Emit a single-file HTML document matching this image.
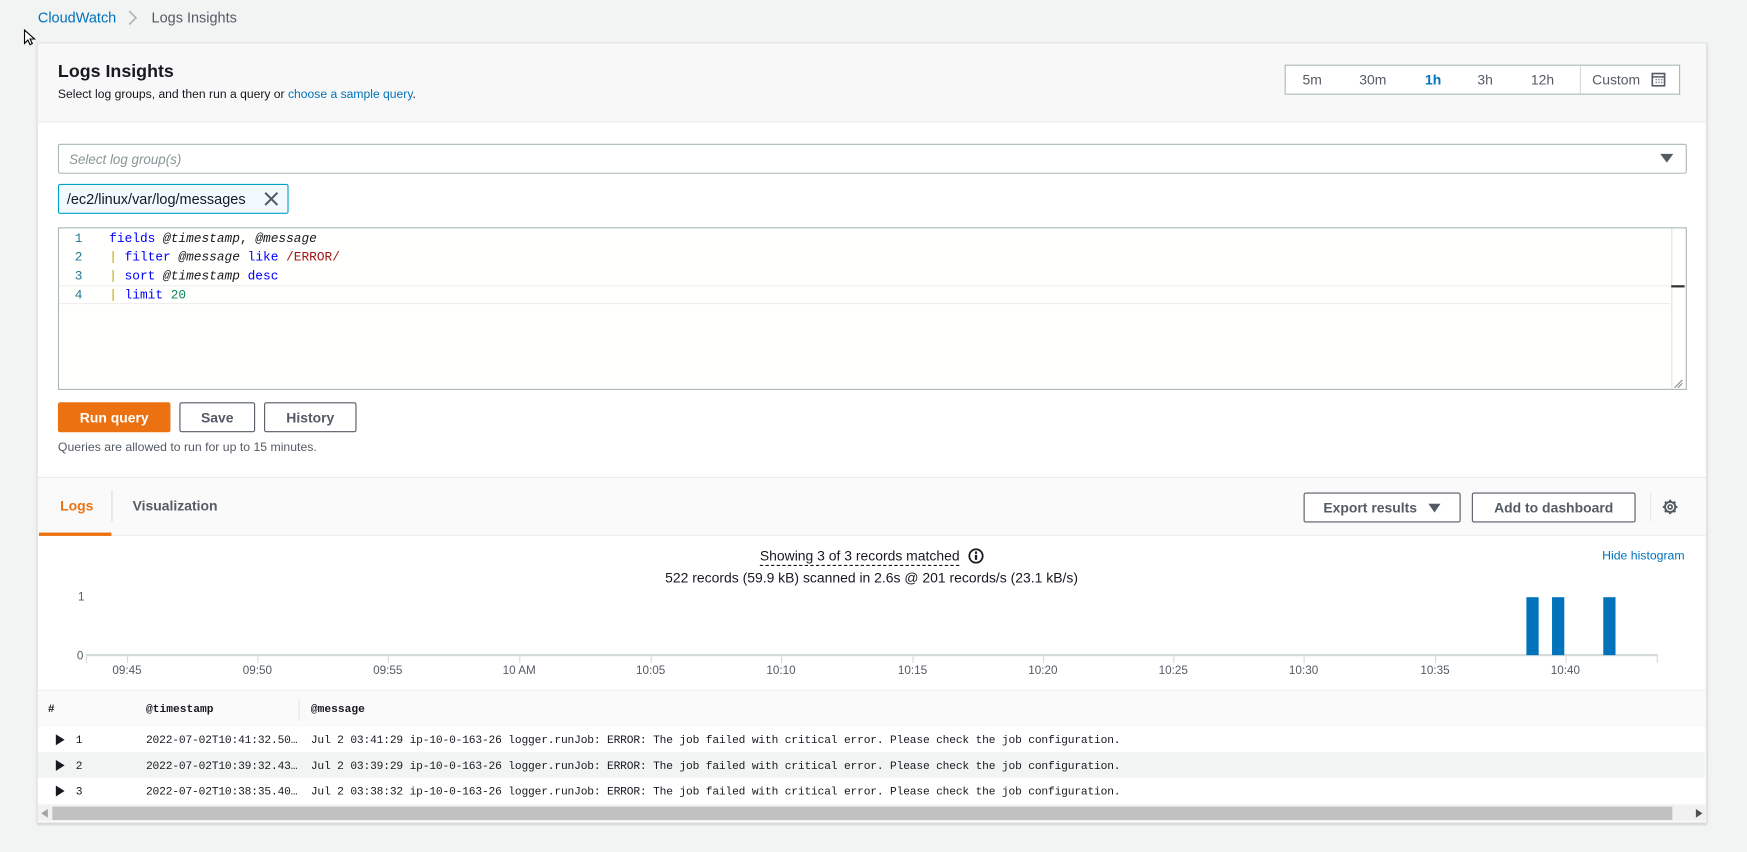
<!DOCTYPE html>
<html><head><meta charset="utf-8"><style>
*{box-sizing:border-box;margin:0;padding:0}
html,body{width:1747px;height:852px;overflow:hidden;background:#f2f3f3}
#s{position:absolute;left:0;top:0;width:1568px;height:765px;transform:scale(1.11416);transform-origin:0 0;font-family:"Liberation Sans",sans-serif;color:#16191f}
.a{position:absolute;white-space:nowrap}
.b{position:absolute;border:1px solid #545b64;border-radius:2px;background:#fff;font-weight:bold;font-size:12.5px;color:#545b64;display:flex;align-items:center;justify-content:center}
.m{font-family:"Liberation Mono",monospace}
.tick{position:absolute;top:589px;width:1px;height:6px;background:#d5dbdb}
.tl{position:absolute;top:596px;font-size:10.5px;color:#545b64;width:60px;text-align:center;margin-left:-30px}
.row{position:absolute;left:34px;width:1496px;height:23px;font-size:10.1px;letter-spacing:-0.15px}
.row span{position:absolute;top:8px}
</style></head><body><div id="s">
<div class="a" style="left:34px;top:8px;font-size:13px;color:#0073bb">CloudWatch</div>
<svg class="a" style="left:114px;top:9px" width="10" height="14"><path d="M2 1l6 6-6 6" fill="none" stroke="#aab7b8" stroke-width="1.5"/></svg>
<div class="a" style="left:136px;top:8px;font-size:13px;color:#545b64">Logs Insights</div>
<svg class="a" style="left:21px;top:26px" width="12" height="16"><path d="M1 1v12l3-3 2 4 2-1-2-4h4z" fill="#fff" stroke="#000" stroke-width="1"/></svg>

<div class="a" style="left:33px;top:38px;width:1499px;height:701px;background:#fff;border:1px solid #dfe3e3;box-shadow:0 1px 2px rgba(0,0,0,.2)"></div>
<div class="a" style="left:34px;top:39px;width:1497px;height:71px;background:#f8f8f8;border-bottom:1px solid #eaeded"></div>
<div class="a" style="left:52px;top:56px;font-size:16px;font-weight:bold">Logs Insights</div>
<div class="a" style="left:52px;top:79px;font-size:10.9px;color:#16191f">Select log groups, and then run a query or <span style="color:#0073bb">choose a sample query</span>.</div>

<div class="a" style="left:1153px;top:58px;width:355px;height:27px;border:1px solid #aab7b8;background:#fff"></div>
<div class="a" style="left:1169px;top:65px;font-size:12.5px;color:#545b64">5m</div>
<div class="a" style="left:1220px;top:65px;font-size:12.5px;color:#545b64">30m</div>
<div class="a" style="left:1279px;top:65px;font-size:12.5px;color:#0073bb;font-weight:bold">1h</div>
<div class="a" style="left:1326px;top:65px;font-size:12.5px;color:#545b64">3h</div>
<div class="a" style="left:1374px;top:65px;font-size:12.5px;color:#545b64">12h</div>
<div class="a" style="left:1418px;top:59px;width:1px;height:25px;background:#d5dbdb"></div>
<div class="a" style="left:1429px;top:65px;font-size:12.5px;color:#545b64">Custom</div>
<svg class="a" style="left:1482px;top:65px" width="13" height="13"><rect x="1" y="1" width="11" height="11" fill="none" stroke="#545b64" stroke-width="1.5"/><path d="M1 4h11M4 6.5h1M6.5 6.5h1M9 6.5h1M4 9h1M6.5 9h1M9 9h1" stroke="#545b64" stroke-width="1.3"/></svg>

<div class="a" style="left:52px;top:129px;width:1462px;height:27px;border:1px solid #aab7b8;border-radius:2px;background:#fff"></div>
<div class="a" style="left:62px;top:136px;font-size:12px;font-style:italic;color:#879596">Select log group(s)</div>
<svg class="a" style="left:1490px;top:138px" width="12" height="9"><path d="M0 0h12L6 8z" fill="#545b64"/></svg>

<div class="a" style="left:52px;top:165px;width:207px;height:27px;border:1px solid #00a1c9;border-radius:2px;background:#f1faff"></div>
<div class="a" style="left:60px;top:171px;font-size:13px;color:#16191f">/ec2/linux/var/log/messages</div>
<svg class="a" style="left:237px;top:172px" width="13" height="13"><path d="M1 1l11 11M12 1L1 12" stroke="#545b64" stroke-width="1.8"/></svg>

<div class="a" style="left:52px;top:204px;width:1462px;height:146px;border:1px solid #aab7b8;background:#fffffd"></div>
<div class="a" style="left:53px;top:256px;width:1446px;height:17px;border-top:1px solid #eeeeee;border-bottom:1px solid #eeeeee"></div>
<div class="a" style="left:1500px;top:205px;width:1px;height:144px;background:#e0e0e0"></div>
<div class="a" style="left:1500px;top:256px;width:12px;height:2px;background:#333"></div>
<div class="a m" style="left:62px;top:206px;font-size:11.5px;line-height:17px;color:#237893;text-align:right;width:12px">1<br>2<br>3<br>4</div>
<div class="a m" style="left:98px;top:206px;font-size:11.5px;line-height:17px;color:#16191f">
<span style="color:#0000ff">fields</span> <i>@timestamp</i>, <i>@message</i><br>
<span style="color:#c8a000">|</span> <span style="color:#0000ff">filter</span> <i>@message</i> <span style="color:#0000ff">like</span> <span style="color:#a31515">/ERROR/</span><br>
<span style="color:#c8a000">|</span> <span style="color:#0000ff">sort</span> <i>@timestamp</i> <span style="color:#0000ff">desc</span><br>
<span style="color:#c8a000">|</span> <span style="color:#0000ff">limit</span> <span style="color:#098658">20</span></div>
<svg class="a" style="left:1502px;top:340px" width="9" height="9"><path d="M1 8L8 1M4 8L8 4" stroke="#888" stroke-width="1"/></svg>

<div class="b" style="left:52px;top:361px;width:101px;height:27px;background:#ec7211;border-color:#ec7211;color:#fff">Run query</div>
<div class="b" style="left:161px;top:361px;width:68px;height:27px">Save</div>
<div class="b" style="left:237px;top:361px;width:83px;height:27px">History</div>
<div class="a" style="left:52px;top:396px;font-size:11px;color:#545b64">Queries are allowed to run for up to 15 minutes.</div>

<div class="a" style="left:34px;top:428px;width:1497px;height:53px;background:#fafafa;border-top:1px solid #eaeded;border-bottom:1px solid #eaeded"></div>
<div class="a" style="left:54px;top:447px;font-size:12.5px;font-weight:bold;color:#ec7211">Logs</div>
<div class="a" style="left:35px;top:478px;width:65px;height:3px;background:#ec7211"></div>
<div class="a" style="left:100px;top:440px;width:1px;height:28px;background:#d5dbdb"></div>
<div class="a" style="left:119px;top:447px;font-size:12.5px;font-weight:bold;color:#545b64">Visualization</div>
<div class="b" style="left:1170px;top:442px;width:141px;height:27px">Export results&nbsp;&nbsp;&nbsp;<svg width="11" height="8"><path d="M0 0h11L5.5 8z" fill="#545b64"/></svg></div>
<div class="b" style="left:1321px;top:442px;width:147px;height:27px">Add to dashboard</div>
<div class="a" style="left:1481px;top:442px;width:1px;height:26px;background:#e5e8e8"></div>
<svg class="a" style="left:1491px;top:447px" width="16" height="16" viewBox="0 0 16 16"><path d="M8 1.5v2.2M8 12.3v2.2M1.5 8h2.2M12.3 8h2.2M3.4 3.4l1.6 1.6M11 11l1.6 1.6M3.4 12.6L5 11M11 5l1.6-1.6" stroke="#545b64" stroke-width="2"/><circle cx="8" cy="8" r="4.6" fill="none" stroke="#545b64" stroke-width="1.8"/><circle cx="8" cy="8" r="1.8" fill="none" stroke="#545b64" stroke-width="1.5"/></svg>

<div class="a" style="left:682px;top:492px;font-size:12.5px;border-bottom:1px dashed #16191f;line-height:15px">Showing 3 of 3 records matched</div>
<svg class="a" style="left:869px;top:492px" width="14" height="14"><circle cx="7" cy="7" r="6" fill="none" stroke="#16191f" stroke-width="1.6"/><rect x="6" y="6" width="2" height="4.5" fill="#16191f"/><rect x="6" y="3" width="2" height="2" fill="#16191f"/></svg>
<div class="a" style="left:597px;top:512px;font-size:12.5px">522 records (59.9 kB) scanned in 2.6s @ 201 records/s (23.1 kB/s)</div>
<div class="a" style="left:1438px;top:493px;font-size:11px;color:#0073bb">Hide histogram</div>

<div class="a" style="left:70px;top:530px;font-size:10.5px;color:#545b64">1</div>
<div class="a" style="left:69px;top:583px;font-size:10.5px;color:#545b64">0</div>
<div class="a" style="left:77px;top:587px;width:1411px;height:2px;background:#d5dbdb"></div>
<div class="a" style="left:77px;top:587px;width:1px;height:8px;background:#d5dbdb"></div>
<div class="a" style="left:1487px;top:587px;width:1px;height:8px;background:#d5dbdb"></div>
<div class="tick" style="left:114px"></div><div class="tl" style="left:114px">09:45</div>
<div class="tick" style="left:231px"></div><div class="tl" style="left:231px">09:50</div>
<div class="tick" style="left:348px"></div><div class="tl" style="left:348px">09:55</div>
<div class="tick" style="left:466px"></div><div class="tl" style="left:466px">10 AM</div>
<div class="tick" style="left:584px"></div><div class="tl" style="left:584px">10:05</div>
<div class="tick" style="left:701px"></div><div class="tl" style="left:701px">10:10</div>
<div class="tick" style="left:819px"></div><div class="tl" style="left:819px">10:15</div>
<div class="tick" style="left:936px"></div><div class="tl" style="left:936px">10:20</div>
<div class="tick" style="left:1053px"></div><div class="tl" style="left:1053px">10:25</div>
<div class="tick" style="left:1170px"></div><div class="tl" style="left:1170px">10:30</div>
<div class="tick" style="left:1288px"></div><div class="tl" style="left:1288px">10:35</div>
<div class="tick" style="left:1405px"></div><div class="tl" style="left:1405px">10:40</div>
<div class="a" style="left:1370px;top:536px;width:11px;height:52px;background:#0073bb"></div>
<div class="a" style="left:1393px;top:536px;width:11px;height:52px;background:#0073bb"></div>
<div class="a" style="left:1439px;top:536px;width:11px;height:52px;background:#0073bb"></div>

<div class="a" style="left:34px;top:619px;width:1497px;height:34px;background:#fafafa;border-top:1px solid #eaeded;border-bottom:1px solid #eaeded"></div>
<div class="a m" style="left:43px;top:632px;font-size:10.1px;font-weight:bold">#</div>
<div class="a m" style="left:131px;top:632px;font-size:10.1px;font-weight:bold">@timestamp</div>
<div class="a" style="left:268px;top:627px;width:1px;height:20px;background:#e5e8e8"></div>
<div class="a m" style="left:279px;top:632px;font-size:10.1px;font-weight:bold">@message</div>

<div class="row m" style="top:652px;background:#fff"><svg style="position:absolute;left:16px;top:7px" width="8" height="10"><path d="M0 0l8 5-8 5z" fill="#16191f"/></svg><span style="left:34px">1</span><span style="left:97px">2022-07-02T10:41:32.50…</span><span style="left:245px">Jul 2 03:41:29 ip-10-0-163-26 logger.runJob: ERROR: The job failed with critical error. Please check the job configuration.</span></div>
<div class="row m" style="top:675px;background:#f2f3f3"><svg style="position:absolute;left:16px;top:7px" width="8" height="10"><path d="M0 0l8 5-8 5z" fill="#16191f"/></svg><span style="left:34px">2</span><span style="left:97px">2022-07-02T10:39:32.43…</span><span style="left:245px">Jul 2 03:39:29 ip-10-0-163-26 logger.runJob: ERROR: The job failed with critical error. Please check the job configuration.</span></div>
<div class="row m" style="top:698px;background:#fff"><svg style="position:absolute;left:16px;top:7px" width="8" height="10"><path d="M0 0l8 5-8 5z" fill="#16191f"/></svg><span style="left:34px">3</span><span style="left:97px">2022-07-02T10:38:35.40…</span><span style="left:245px">Jul 2 03:38:32 ip-10-0-163-26 logger.runJob: ERROR: The job failed with critical error. Please check the job configuration.</span></div>
<div class="a" style="left:34px;top:722px;width:1497px;height:15px;background:#f1f1f1"></div>
<div class="a" style="left:47px;top:724px;width:1454px;height:12px;background:#c1c1c1"></div>
<svg class="a" style="left:37px;top:726px" width="6" height="8"><path d="M6 0v8L0 4z" fill="#a3a3a3"/></svg>
<svg class="a" style="left:1522px;top:726px" width="6" height="8"><path d="M0 0v8l6-4z" fill="#505050"/></svg>
</div></body></html>
